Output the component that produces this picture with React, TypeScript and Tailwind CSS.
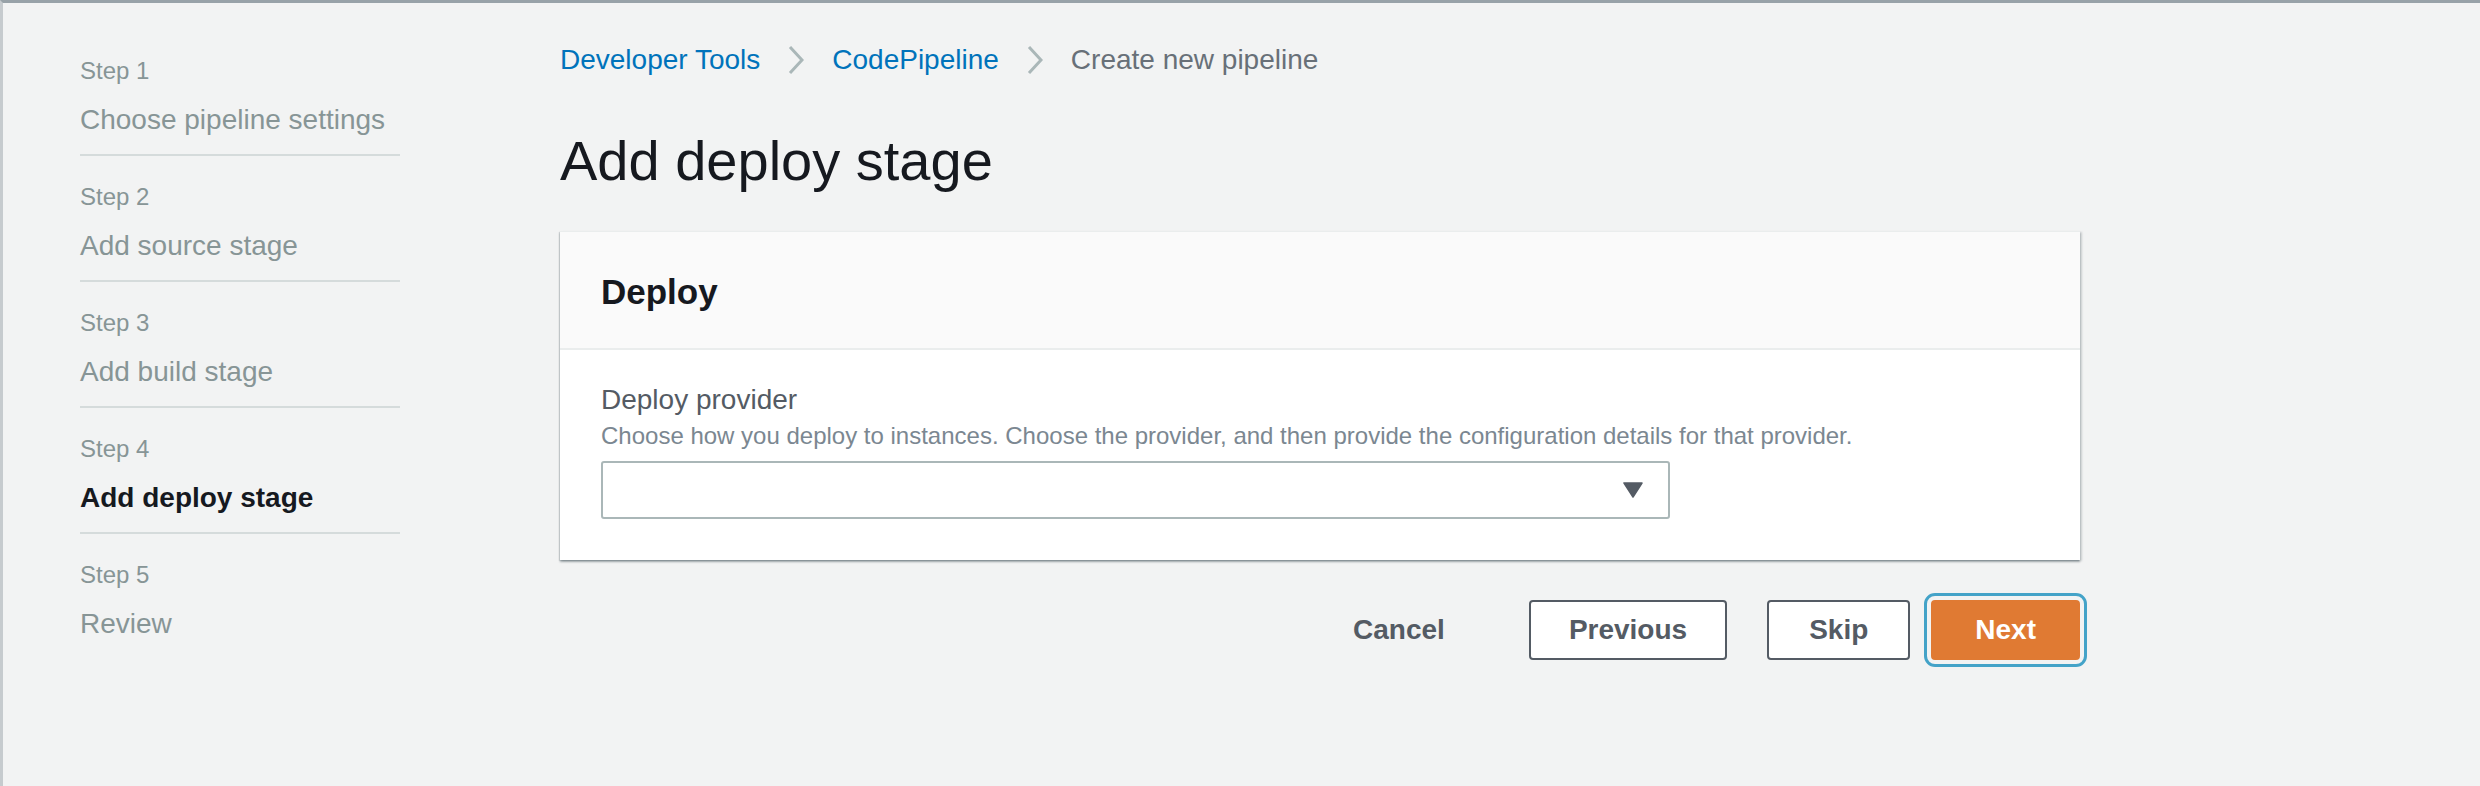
const steps = [
  { label: 'Step 1', name: 'Choose pipeline settings' },
  { label: 'Step 2', name: 'Add source stage' },
  { label: 'Step 3', name: 'Add build stage' },
  { label: 'Step 4', name: 'Add deploy stage', active: true },
  { label: 'Step 5', name: 'Review' },
]

function Sidebar() {
  return (
    <nav className="w-[320px] shrink-0 pt-[27px]">
      {steps.map((s, i) => (
        <div
          key={s.label}
          className={
            i < steps.length - 1
              ? 'border-b-2 border-[#d5dbdb] pt-[25px] pb-[16px]'
              : 'pt-[25px] pb-[16px]'
          }
        >
          <div className="text-[24px] leading-[32px] text-[#879596]">{s.label}</div>
          <div
            className={
              s.active
                ? 'mt-[15px] text-[28px] leading-[36px] font-bold text-[#16191f]'
                : 'mt-[15px] text-[28px] leading-[36px] text-[#879596]'
            }
          >
            {s.name}
          </div>
        </div>
      ))}
    </nav>
  )
}

function Chevron() {
  return (
    <svg className="mx-[28px] shrink-0" width="16" height="30" viewBox="0 0 16 30">
      <path d="M2 2 L14 15 L2 28" fill="none" stroke="#aab7b8" strokeWidth="3" />
    </svg>
  )
}

function Crumbs() {
  return (
    <div className="flex items-center text-[28px] leading-[36px]">
      <span className="text-[#0073bb]">Developer Tools</span>
      <Chevron />
      <span className="text-[#0073bb]">CodePipeline</span>
      <Chevron />
      <span className="text-[#687078]">Create new pipeline</span>
    </div>
  )
}

export default function App() {
  return (
    <div
      className="flex h-[786px] w-[2480px] border-t-[3px] border-l-[3px] border-t-[#98a2a8] border-l-[#c6cbce] bg-[#f2f3f3] pl-[77px]"
      style={{ fontFamily: '"Liberation Sans", Arial, sans-serif' }}
    >
      <Sidebar />

      <main className="ml-[160px] w-[1520px] shrink-0 pt-[39px]">
        <Crumbs />
        <h1 className="mt-[51px] text-[56px] leading-[64px] font-normal text-[#16191f]">Add deploy stage</h1>

        <section className="mt-[38px] border-t border-[#eaeded] bg-white shadow-[0_2px_2px_rgba(0,28,36,0.3),2px_1px_2px_rgba(0,28,36,0.15),-1px_1px_1px_rgba(0,28,36,0.12)]">
          <div className="border-b-2 border-[#eaeded] bg-[#fafafa] px-[41px] pt-[38px] pb-[34px]">
            <h2 className="text-[35px] leading-[44px] font-bold text-[#16191f]">Deploy</h2>
          </div>
          <div className="px-[41px] pt-[32px] pb-[41px]">
            <div className="text-[28px] leading-[36px] text-[#545b64]">Deploy provider</div>
            <div className="mt-[2px] text-[24px] leading-[32px] text-[#7b8791]">
              Choose how you deploy to instances. Choose the provider, and then provide the configuration details for
              that provider.
            </div>
            <div className="mt-[9px] flex h-[58px] w-[1069px] items-center justify-end rounded-[3px] border-2 border-[#aab7b8] bg-white pr-[25px]">
              <svg width="20" height="16" viewBox="0 0 20 16">
                <path d="M1 1 L19 1 L10 15 Z" fill="#545b64" stroke="#545b64" strokeWidth="1.5" strokeLinejoin="round" />
              </svg>
            </div>
          </div>
        </section>

        <div className="mt-[40px] flex items-center justify-end">
          <button className="h-[60px] rounded-[4px] border-2 border-transparent px-[40px] text-[28px] font-bold text-[#545b64]">
            Cancel
          </button>
          <button className="ml-[42px] h-[60px] rounded-[4px] border-2 border-[#545b64] bg-white px-[38px] text-[28px] font-bold text-[#545b64]">
            Previous
          </button>
          <button className="ml-[40px] h-[60px] rounded-[4px] border-2 border-[#545b64] bg-white px-[40px] text-[28px] font-bold text-[#545b64]">
            Skip
          </button>
          <button className="ml-[21px] h-[60px] rounded-[4px] border-2 border-[#e07a33] bg-[#e07a33] px-[42px] text-[28px] font-bold text-white outline-[3px] outline-offset-[4px] outline-[#44a3c8] outline-solid">
            Next
          </button>
        </div>
      </main>
    </div>
  )
}
